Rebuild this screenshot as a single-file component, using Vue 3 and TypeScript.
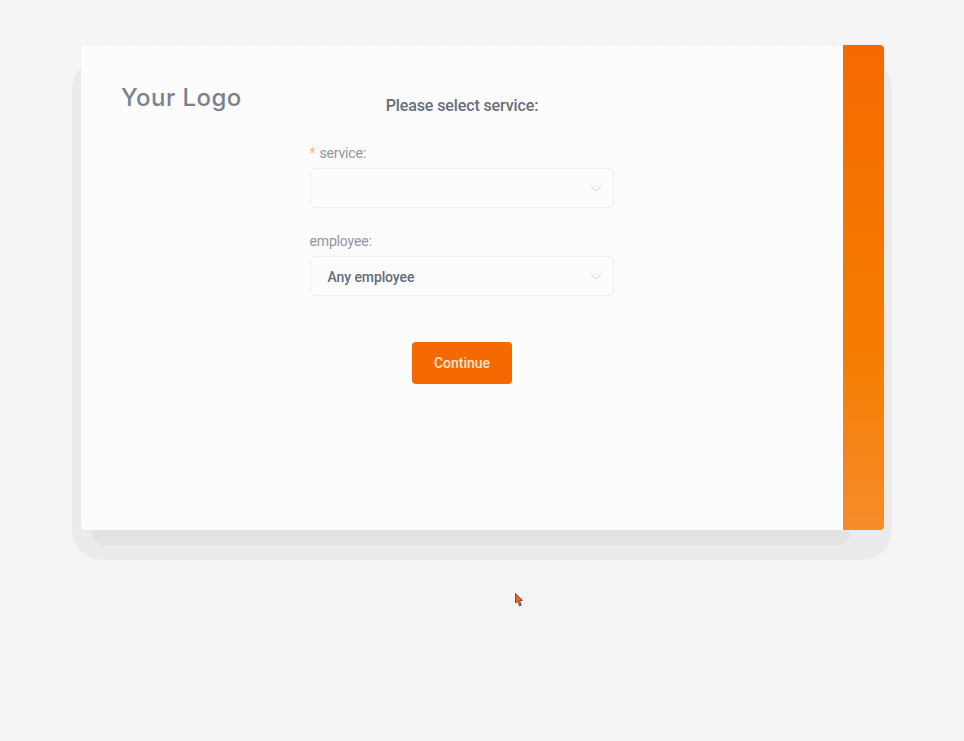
<script setup lang="ts">
interface Field {
  label: string
  required: boolean
  value: string
}

const fields: Field[] = [
  { label: 'service:', required: true, value: '' },
  { label: 'employee:', required: false, value: 'Any employee' }
]
</script>

<template>
  <div class="page">
    <section class="card">
      <main class="content">
        <h1 class="logo">Your Logo</h1>
        <form class="booking-form" @submit.prevent>
          <h2 class="title">Please select service:</h2>
          <div v-for="field in fields" :key="field.label" class="field">
            <label class="field-label">
              <span v-if="field.required" class="required">*</span>{{ field.label }}
            </label>
            <div class="select">
              <span class="select-value">{{ field.value }}</span>
              <svg class="chevron" width="12" height="7" viewBox="0 0 12 7" fill="none">
                <path d="M0.5 0.7 L6 6 L11.5 0.7" stroke="#d3d7de" stroke-width="1" />
              </svg>
            </div>
          </div>
          <button class="continue" type="submit">Continue</button>
        </form>
      </main>
      <aside class="side-panel"></aside>
    </section>
    <svg class="cursor" width="11" height="16" viewBox="0 0 11 16">
      <path d="M1.5 1.5 L1.5 11 L3.6 9.3 L5.5 14 L7.2 13.2 L5.6 8.6 L8.6 8.4 Z" fill="#f56a00" stroke="#4a4d55" stroke-width="0.9" stroke-linejoin="round" />
    </svg>
  </div>
</template>

<style>
html,
body {
  margin: 0;
  background: #f5f5f5;
}
</style>

<style scoped>
.page {
  position: relative;
  box-sizing: border-box;
  height: 741px;
  padding: 45px 80px 0 81px;
  overflow: hidden;
  background-color: #f4f4f4;
  background-image: radial-gradient(circle, #fafafa 0.7px, transparent 0.8px);
  background-size: 3px 3px;
  font-family: Roboto, "Liberation Sans", sans-serif;
}

.card {
  position: relative;
  z-index: 0;
  display: flex;
  height: 485px;
  border-radius: 4px;
  background: #fcfcfc;
  box-shadow: 0 0 0 1px #eef0f3;
}

.card::before {
  content: "";
  position: absolute;
  z-index: -2;
  top: 14px;
  right: -8px;
  bottom: -30px;
  left: -9px;
  border-radius: 30px;
  background: #ebebeb;
}

.card::after {
  content: "";
  position: absolute;
  z-index: -1;
  top: 40px;
  right: 34px;
  bottom: -15px;
  left: 11px;
  border-radius: 0 0 12px 12px;
  background: #e3e3e3;
}

.content {
  flex: 1;
  display: grid;
  grid-template-columns: 1fr 305px 1fr;
  background: #fcfcfc;
  border-radius: 4px 0 0 4px;
}

.logo {
  margin: 37px 0 0 40px;
  color: #7a828e;
  font-family: Inter, sans-serif;
  font-size: 24px;
  font-weight: 500;
  line-height: 32px;
  letter-spacing: 0.45px;
  white-space: nowrap;
}

.booking-form {
  grid-column: 2;
  display: flex;
  flex-direction: column;
  padding-top: 50px;
}

.title {
  margin: 0 0 27px;
  color: #666e7b;
  font-size: 16px;
  font-weight: 500;
  line-height: 22px;
  letter-spacing: -0.12px;
  text-align: center;
}

.field {
  margin-bottom: 24px;
}

.field-label {
  display: block;
  height: 24px;
  color: #8f96a0;
  font-size: 14px;
  line-height: 18px;
  letter-spacing: -0.15px;
}

.required {
  margin-right: 4px;
  color: #fbb27c;
}

.select {
  display: flex;
  align-items: center;
  justify-content: space-between;
  box-sizing: border-box;
  width: 304px;
  height: 40px;
  padding: 0 11px 0 17px;
  border: 1px solid #eceef2;
  border-radius: 5px;
  background: #fcfcfd;
}

.select-value {
  padding-top: 1px;
  color: #646c7a;
  font-size: 14px;
  font-weight: 500;
  letter-spacing: -0.1px;
}

.continue {
  align-self: center;
  width: 100px;
  height: 42px;
  margin-top: 22px;
  border: 0;
  border-radius: 4px;
  background: #f56a00;
  color: #fde3cb;
  font-family: inherit;
  font-size: 14px;
  font-weight: 500;
  letter-spacing: 0;
}

.side-panel {
  flex: none;
  width: 41px;
  border-radius: 0 4px 4px 0;
  background: linear-gradient(180deg, #f56a00 0%, #f57200 30%, #f57c00 62%, #f68c2a 100%);
}

.cursor {
  position: absolute;
  left: 514px;
  top: 592px;
}
</style>
